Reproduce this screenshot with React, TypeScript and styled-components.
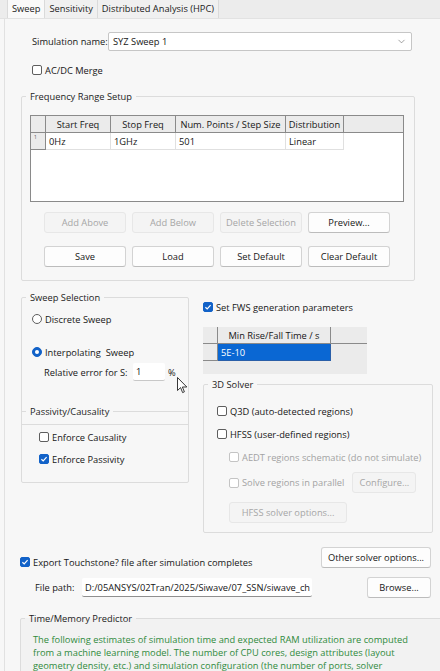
import styled, { createGlobalStyle } from "styled-components";
import { ChevronDown } from "lucide-react";

const GlobalStyle = createGlobalStyle`
  html, body {
    margin: 0;
    padding: 0;
    background: #f7f7f7;
  }
`;

type CheckProps = {
  label: string;
  checked?: boolean;
  disabled?: boolean;
  radio?: boolean;
};

function Check({ label, checked, disabled, radio }: CheckProps) {
  return (
    <CheckLabel $disabled={disabled}>
      <Box $checked={checked} $disabled={disabled} $radio={radio}>
        {checked && !radio && (
          <svg width="8" height="8" viewBox="0 0 8 8">
            <path
              d="M1.4 4.2 L3.2 5.9 L6.6 2.2"
              fill="none"
              stroke="#fff"
              strokeWidth="1.2"
            />
          </svg>
        )}
        {checked && radio && <Dot />}
      </Box>
      {label}
    </CheckLabel>
  );
}

function Cursor() {
  return (
    <CursorMark width="11" height="17" viewBox="0 0 11 17">
      <path
        d="M0.5 0.5 L0.5 13.5 L3.6 10.6 L5.6 15.6 L7.4 14.8 L5.4 10 L9.8 10 Z"
        fill="#fff"
        stroke="#222"
        strokeWidth="0.9"
        strokeLinejoin="round"
      />
    </CursorMark>
  );
}

export default function App() {
  return (
    <Window>
      <GlobalStyle />
      <TabBar>
        <Tab $active>Sweep</Tab>
        <Tab>Sensitivity</Tab>
        <Tab>Distributed Analysis (HPC)</Tab>
      </TabBar>

      <Panel>
        <NameRow>
          <FieldLabel $w={76}>Simulation name:</FieldLabel>
          <Select>
            <span>SYZ Sweep 1</span>
            <ChevronDown size={11} strokeWidth={1.4} color="#6d6d6d" />
          </Select>
        </NameRow>

        <Indent $left={27} $top={13}>
          <Check label="AC/DC Merge" />
        </Indent>

        <Group $w={394} $left={16} $top={14}>
          <Legend>Frequency Range Setup</Legend>
          <FreqBody>
            <FreqTable>
              <HeadCell />
              <HeadCell>Start Freq</HeadCell>
              <HeadCell>Stop Freq</HeadCell>
              <HeadCell>Num. Points / Step Size</HeadCell>
              <HeadCell>Distribution</HeadCell>
              <HeadCell $last />
              <RowHead>1</RowHead>
              <Cell>0Hz</Cell>
              <Cell>1GHz</Cell>
              <Cell>501</Cell>
              <Cell>Linear</Cell>
            </FreqTable>
            <ButtonGrid>
              <Button disabled>Add Above</Button>
              <Button disabled>Add Below</Button>
              <Button disabled>Delete Selection</Button>
              <Button>Preview...</Button>
              <Button>Save</Button>
              <Button>Load</Button>
              <Button>Set Default</Button>
              <Button>Clear Default</Button>
            </ButtonGrid>
          </FreqBody>
        </Group>

        <Lower>
          <Group $w={168} $h={192}>
            <Legend>Sweep Selection</Legend>
            <SweepBody>
              <Check radio label="Discrete Sweep" />
              <Spacer $h={21} />
              <Check radio checked label="Interpolating  Sweep" />
              <ErrorRow>
                <FieldLabel $w={86}>Relative error for S:</FieldLabel>
                <SmallInput>1</SmallInput>
                <span>%</span>
              </ErrorRow>
            </SweepBody>
            <SubGroup>
              <Legend>Passivity/Causality</Legend>
              <PassivityBox>
                <Check label="Enforce Causality" />
                <Check checked label="Enforce Passivity" />
              </PassivityBox>
            </SubGroup>
          </Group>

          <RightCol>
            <Check checked label="Set FWS generation parameters" />
            <FwsTable>
              <HeadCell />
              <HeadCell>Min Rise/Fall Time / s</HeadCell>
              <HeadCell $last />
              <RowHead />
              <Cell $selected>5E-10</Cell>
            </FwsTable>

            <Group $w={230} $top={4}>
              <Legend>3D Solver</Legend>
              <SolverBody>
                <Check label="Q3D (auto-detected regions)" />
                <Check label="HFSS (user-defined regions)" />
                <SolverSub>
                  <Check disabled label="AEDT regions schematic (do not simulate)" />
                  <ParallelRow>
                    <Check disabled label="Solve regions in parallel" />
                    <Button disabled $w={64}>
                      Configure...
                    </Button>
                  </ParallelRow>
                  <Button disabled $w={118}>
                    HFSS solver options...
                  </Button>
                </SolverSub>
              </SolverBody>
            </Group>
          </RightCol>
        </Lower>

        <ExportRow>
          <Check checked label="Export Touchstone? file after simulation completes" />
          <Button $w={110}>Other solver options...</Button>
        </ExportRow>

        <PathRow>
          <FieldLabel $w={47}>File path:</FieldLabel>
          <PathInput>D:/05ANSYS/02Tran/2025/Siwave/07_SSN/siwave_ch</PathInput>
          <Button $w={64}>Browse...</Button>
        </PathRow>

        <Group $w={430} $left={15} $top={14} $shade>
          <Legend>Time/Memory Predictor</Legend>
          <Note>
            The following estimates of simulation time and expected RAM utilization are computed
            <br />
            from a machine learning model. The number of CPU cores, design attributes (layout
            <br />
            geometry density, etc.) and simulation configuration (the number of ports, solver
          </Note>
        </Group>
      </Panel>

      <Cursor />
    </Window>
  );
}

const Window = styled.div`
  position: relative;
  width: 440px;
  height: 671px;
  overflow: hidden;
  background: #f7f7f7;
  font-family: "Open Sans", "Noto Sans", sans-serif;
  font-size: 9.3px;
  color: #161616;
`;

const TabBar = styled.div`
  display: flex;
  height: 18px;
  padding-left: 7px;
  background: #ececec;
  border-bottom: 1px solid #e2e2e2;
`;

const Tab = styled.div<{ $active?: boolean }>`
  padding: 0 4px;
  line-height: 18px;
  background: ${(p) => (p.$active ? "#f9f9f9" : "#f0f0f0")};
  border-right: 1px solid #dadada;
  border-left: ${(p) => (p.$active ? "1px solid #dadada" : "none")};
  color: #1a1a1a;
`;

const Panel = styled.div`
  margin-left: 4px;
  height: 652px;
  padding-top: 13px;
  box-sizing: border-box;
  border-left: 1px solid #e1e1e1;
`;

const NameRow = styled.div`
  display: flex;
  align-items: center;
  margin-left: 27px;
`;

const FieldLabel = styled.span<{ $w: number }>`
  flex: 0 0 ${(p) => p.$w}px;
  white-space: nowrap;
`;

const Select = styled.div`
  display: flex;
  align-items: center;
  justify-content: space-between;
  width: 304px;
  height: 19px;
  box-sizing: border-box;
  padding: 0 4px 0 4px;
  background: #fff;
  border: 1px solid #c6c6c6;
  border-radius: 2px;
`;

const Indent = styled.div<{ $left: number; $top: number }>`
  margin: ${(p) => p.$top}px 0 0 ${(p) => p.$left}px;
`;

const CheckLabel = styled.label<{ $disabled?: boolean }>`
  display: flex;
  align-items: center;
  gap: 3px;
  height: 12px;
  white-space: pre;
  color: ${(p) => (p.$disabled ? "#a3a3a3" : "inherit")};
`;

const Box = styled.span<{ $checked?: boolean; $disabled?: boolean; $radio?: boolean }>`
  display: flex;
  align-items: center;
  justify-content: center;
  flex: 0 0 10px;
  height: 10px;
  box-sizing: border-box;
  border-radius: ${(p) => (p.$radio ? "50%" : "2px")};
  border: 1px solid
    ${(p) => (p.$checked ? "#1262c8" : p.$disabled ? "#c4c4c4" : "#5e5e5e")};
  background: ${(p) => (p.$checked ? "#1262c8" : "#fff")};
`;

const Dot = styled.span`
  width: 4px;
  height: 4px;
  border-radius: 50%;
  background: #fff;
`;

const Group = styled.fieldset<{
  $w: number;
  $h?: number;
  $left?: number;
  $top?: number;
  $shade?: boolean;
}>`
  margin: ${(p) => p.$top ?? 0}px 0 0 ${(p) => p.$left ?? 0}px;
  padding: 0;
  min-width: 0;
  width: ${(p) => p.$w}px;
  height: ${(p) => (p.$h ? `${p.$h}px` : "auto")};
  box-sizing: border-box;
  border: 1px solid #dcdcdc;
  border-radius: 2px;
  background: ${(p) => (p.$shade ? "#f2f2f2" : "transparent")};
`;

const Legend = styled.legend`
  margin-left: 4px;
  padding: 0 4px;
  line-height: 13px;
  color: #1c1c1c;
`;

const FreqBody = styled.div`
  padding: 12px 0 13px 8px;
`;

const FreqTable = styled.div`
  display: grid;
  grid-template-columns: 15px 65px 65px 110px 58px 1fr;
  grid-auto-rows: 17px;
  align-content: start;
  width: 374px;
  height: 87px;
  box-sizing: border-box;
  border: 1px solid #8a8a8a;
  background: #fff;
`;

const HeadCell = styled.div<{ $last?: boolean }>`
  display: flex;
  align-items: center;
  justify-content: center;
  background: #ebebeb;
  border-bottom: 1px solid #8a8a8a;
  border-right: ${(p) => (p.$last ? "none" : "1px solid #8a8a8a")};
  white-space: nowrap;
  overflow: hidden;
`;

const RowHead = styled.div`
  padding: 1px 0 0 3px;
  font-size: 5px;
  line-height: 6px;
  color: #555;
  background: #ebebeb;
  border-right: 1px solid #8a8a8a;
  border-bottom: 1px solid #8a8a8a;
`;

const Cell = styled.div<{ $selected?: boolean }>`
  display: flex;
  align-items: center;
  padding-left: 3px;
  background: ${(p) => (p.$selected ? "#0a67d3" : "#fff")};
  color: ${(p) => (p.$selected ? "#fff" : "inherit")};
  border-right: 1px solid ${(p) => (p.$selected ? "#2a5fa8" : "#e0e0e0")};
  border-bottom: 1px solid ${(p) => (p.$selected ? "#2a5fa8" : "#e0e0e0")};
`;

const ButtonGrid = styled.div`
  display: grid;
  grid-template-columns: repeat(4, 82px);
  column-gap: 6px;
  row-gap: 13px;
  margin: 10px 0 0 14px;
`;

const Button = styled.button<{ $w?: number }>`
  width: ${(p) => (p.$w ? `${p.$w}px` : "auto")};
  height: 21px;
  padding: 0;
  font: inherit;
  color: #161616;
  background: #fdfdfd;
  border: 1px solid #d3d3d3;
  border-bottom-color: #bcbcbc;
  border-radius: 3px;
  white-space: nowrap;

  &:disabled {
    color: #a6a6a6;
    background: #f4f4f4;
    border-color: #e7e7e7;
  }
`;

const Lower = styled.div`
  display: flex;
  align-items: flex-start;
  gap: 14px;
  margin: 10px 0 0 16px;
`;

const SweepBody = styled.div`
  display: flex;
  flex-direction: column;
  padding: 9px 0 0 10px;
`;

const Spacer = styled.div<{ $h: number }>`
  height: ${(p) => p.$h}px;
`;

const ErrorRow = styled.div`
  display: flex;
  align-items: center;
  gap: 3px;
  margin: 5px 0 0 12px;
`;

const SmallInput = styled.div`
  display: flex;
  align-items: center;
  width: 32px;
  height: 18px;
  box-sizing: border-box;
  padding-left: 3px;
  background: #fff;
  border-bottom: 1px solid #c8c8c8;
  border-radius: 2px;
`;

const SubGroup = styled.fieldset`
  margin: 24px 0 0;
  padding: 0;
  min-width: 0;
  border: none;
  border-top: 1px solid #dcdcdc;
`;

const PassivityBox = styled.div`
  display: flex;
  flex-direction: column;
  gap: 10px;
  margin-top: 6px;
  padding: 6px 0 0 17px;
  border-top: 1px solid #dcdcdc;
`;

const RightCol = styled.div`
  display: flex;
  flex-direction: column;
  align-items: flex-start;
  padding-top: 10px;
`;

const FwsTable = styled.div`
  display: grid;
  grid-template-columns: 15px 113px 1fr;
  grid-auto-rows: 17px;
  align-content: start;
  width: 164px;
  height: 47px;
  margin-top: 14px;
  background: #ebebeb;
`;

const SolverBody = styled.div`
  display: flex;
  flex-direction: column;
  gap: 11px;
  padding: 14px 0 9px 13px;
`;

const SolverSub = styled.div`
  display: flex;
  flex-direction: column;
  align-items: flex-start;
  gap: 9px;
  margin-left: 12px;
`;

const ParallelRow = styled.div`
  display: flex;
  align-items: center;
  gap: 8px;
`;

const ExportRow = styled.div`
  display: flex;
  align-items: flex-end;
  justify-content: space-between;
  margin: 14px 9px 0 15px;
`;

const PathRow = styled.div`
  display: flex;
  align-items: center;
  margin: 9px 9px 0 30px;

  & > button {
    margin-left: auto;
  }
`;

const PathInput = styled.div`
  display: flex;
  align-items: center;
  width: 230px;
  height: 19px;
  box-sizing: border-box;
  padding-left: 3px;
  background: #fff;
  border-bottom: 1px solid #8f8f8f;
  border-radius: 2px;
  white-space: nowrap;
  overflow: hidden;
`;

const Note = styled.div`
  padding: 8px 0 0 12px;
  line-height: 13px;
  color: #2f8a3c;
  white-space: nowrap;
`;

const CursorMark = styled.svg`
  position: absolute;
  left: 177px;
  top: 377px;
`;
